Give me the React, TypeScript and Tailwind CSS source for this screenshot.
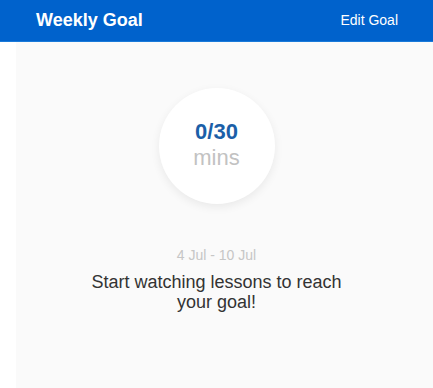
export default function App() {
    return (
        <div className="w-[433px] h-[388px] bg-white overflow-hidden" style={{ fontFamily: '"Liberation Sans", Arial, sans-serif' }}>
            <div className="h-[42px] bg-[#0062cc] border-b border-[#1a7ad9] flex items-center justify-between pl-9 pr-[35px]">
                <h1 className="text-[18px] font-bold text-white">Weekly Goal</h1>
                <button className="text-[14px] text-white">Edit Goal</button>
            </div>
            <div className="ml-4 h-[346px] bg-[#fafafa] flex flex-col items-center">
                <div className="mt-[46px] mr-4 w-[116px] h-[116px] rounded-full bg-white shadow-[0_3px_10px_rgba(0,0,0,0.07)] flex flex-col items-center justify-center">
                    <span className="text-[22px] font-bold leading-6 text-[#1b5fa8]">0/30</span>
                    <span className="text-[22px] leading-7 text-[#c2c2c2]">mins</span>
                </div>
                <p className="mt-[41px] mr-4 text-[14px] text-[#c6c6c6]">4 Jul - 10 Jul</p>
                <p className="mt-[6px] mr-4 w-[264px] text-center text-[18px] leading-[20px] text-[#333]">Start watching lessons to reach your goal!</p>
            </div>
        </div>
    );
}
